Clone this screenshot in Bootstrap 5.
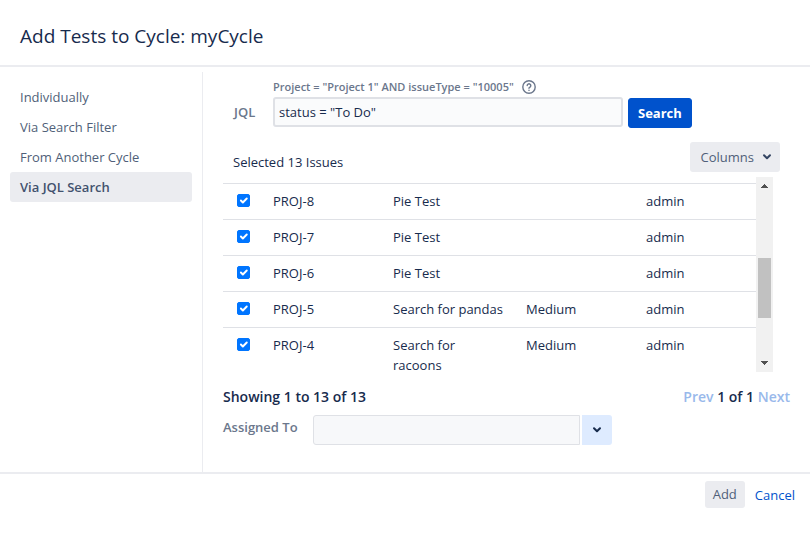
<!DOCTYPE html>
<html lang="en">
<head>
<meta charset="utf-8">
<meta name="viewport" content="width=device-width, initial-scale=1">
<title>Add Tests to Cycle: myCycle</title>
<link href="https://cdn.jsdelivr.net/npm/bootstrap@5.3.0/dist/css/bootstrap.min.css" rel="stylesheet">
<style>
  body { font-family: "Open Sans", "Noto Sans", sans-serif; font-size: 13px; line-height: 20px; color: #172b4d; background: #fff; }
  .btn, .form-control { font-size: 13px; line-height: 20px; border-radius: 3px; color: #172b4d; }
  .dialog-head { height: 67px; padding: 6px 20px 0; border-bottom: 2px solid #ebecf0; }
  .dialog-head h1 { font-size: 19px; line-height: 24px; font-weight: 500; }
  .dialog-body { padding-top: 5px; border-bottom: 2px solid #ebecf0; }
  .side { width: 203px; padding: 10px; border-right: 1px solid #ebecf0; }
  .side .nav-link { padding: 5px 10px; color: #505f79; border-radius: 3px; }
  .side .nav-link.active { background: #ebecf0; color: #42526e; font-weight: 600; }
  .main { padding: 6px 20px 27px; min-width: 0; }
  .form-label { color: #6b778c; }
  .jql-row { padding-left: 11px; }
  .jql-label { width: 39px; margin: 24px 0 0; }
  .jql-field { width: 350px; }
  .jql-hint { font-size: 11px; line-height: 17px; font-weight: 600; color: #6b778c; height: 17px; margin-bottom: 2px; }
  .jql-field .form-control { height: 30px; padding: 3px 4px; background: #fafbfc; border: 2px solid #dfe1e6; }
  .btn-search { height: 30px; padding: 4px 9px; margin: 20px 0 0 5px; background: #0052cc; color: #fff; font-weight: 700; border: 1px solid #0052cc; }
  .btn-soft { background: #ebecf0; border: 0; color: #505f79; }
  .list-head { padding: 14px 10px 0; }
  .list-count { padding-top: 10px; }
  .btn-columns { height: 30px; padding: 5px 8px 5px 11px; }
  .grid { height: 195px; margin: 5px 17px 0 0; }
  .grid-view { padding-top: 6px; overflow: hidden; }
  .issues { table-layout: fixed; color: #172b4d; }
  .issues td { padding: 7px 8px 8px; border: 0; border-top: 1px solid #dfe1e6; background: none; line-height: 20px; }
  .issues td:nth-child(3) { padding-right: 20px; }
  .issues .form-check-input { display: block; width: 13px; height: 13px; margin: 3px 0 0 6px; border-radius: 2px; background-size: 13px; }
  .form-check-input:checked { background-color: #0075ff; border-color: #0075ff; }
  .c-check { width: 42px; } .c-key, .c-prio { width: 120px; } .c-name { width: 133px; }
  .track { width: 17px; background: #f1f1f1; }
  .thumb { width: 13px; height: 60px; margin-top: 26px; background: #c1c1c1; }
  .track svg { height: 17px; }
  .status { padding-top: 15px; font-size: 14px; font-weight: 600; }
  .pager a { color: #99b9eb; text-decoration: none; }
  .assign-label { width: 90px; margin: 2px 0 0; }
  .assign-box { width: 267px; }
  .assign-box.form-control { height: 30px; background: #f7f8fa; border: 1px solid #dfe1e6; border-radius: 3px 0 0 3px; }
  .btn-drop { width: 30px; height: 30px; padding: 0; margin-left: 2px; background: #deebff; border: 0; border-radius: 0 3px 3px 0; }
  .dialog-foot { padding: 7px 15px 30px; }
  .btn-add { height: 27px; padding: 3px 8px 4px; }
  .dialog-foot a { margin-left: 10px; color: #0052cc; text-decoration: none; }
</style>
</head>
<body>
<header class="dialog-head d-flex align-items-center">
  <h1 class="m-0">Add Tests to Cycle: myCycle</h1>
</header>
<div class="dialog-body d-flex">
  <nav class="side nav flex-column flex-shrink-0" aria-label="Ways to add tests">
    <a class="nav-link" href="#">Individually</a>
    <a class="nav-link" href="#">Via Search Filter</a>
    <a class="nav-link" href="#">From Another Cycle</a>
    <a class="nav-link active" href="#" aria-current="page">Via JQL Search</a>
  </nav>
  <main class="main flex-grow-1">
    <form class="jql-row d-flex">
      <label class="form-label jql-label fw-semibold" for="jql">JQL</label>
      <div class="jql-field">
        <div class="jql-hint d-flex align-items-center">
          <span>Project = "Project 1" AND issueType = "10005"</span>
          <svg class="ms-2 flex-shrink-0" width="14" height="14" viewBox="0 0 14 14" fill="none" stroke="#6b778c" stroke-width="1.4" stroke-linecap="round" stroke-linejoin="round" role="img" aria-label="Help"><circle cx="7" cy="7" r="6.2"/><path d="M5.2 5.5a1.8 1.8 0 1 1 2.8 1.6c-.7.4-1 .7-1 1.2"/><path d="M7 10.3v.1"/></svg>
        </div>
        <input class="form-control" id="jql" type="text" value='status = "To Do"'>
      </div>
      <button class="btn btn-search" type="button">Search</button>
    </form>
    <div class="list-head d-flex justify-content-between">
      <span class="list-count">Selected 13 Issues</span>
      <button class="btn btn-soft btn-columns d-flex align-items-center" type="button">Columns
        <svg class="ms-2" width="10" height="8" viewBox="0 0 10 8" fill="none" stroke="#344563" stroke-width="2" stroke-linecap="round" stroke-linejoin="round" aria-hidden="true"><path d="M2 2.3l3 3 3-3"/></svg>
      </button>
    </div>
    <div class="grid d-flex">
      <div class="grid-view flex-grow-1">
        <table class="table issues m-0">
          <colgroup><col class="c-check"><col class="c-key"><col class="c-name"><col class="c-prio"><col></colgroup>
          <tbody>
            <tr><td><input class="form-check-input" type="checkbox" checked aria-label="Select PROJ-8"></td><td>PROJ-8</td><td>Pie Test</td><td></td><td>admin</td></tr>
            <tr><td><input class="form-check-input" type="checkbox" checked aria-label="Select PROJ-7"></td><td>PROJ-7</td><td>Pie Test</td><td></td><td>admin</td></tr>
            <tr><td><input class="form-check-input" type="checkbox" checked aria-label="Select PROJ-6"></td><td>PROJ-6</td><td>Pie Test</td><td></td><td>admin</td></tr>
            <tr><td><input class="form-check-input" type="checkbox" checked aria-label="Select PROJ-5"></td><td>PROJ-5</td><td class="text-nowrap">Search for pandas</td><td>Medium</td><td>admin</td></tr>
            <tr><td><input class="form-check-input" type="checkbox" checked aria-label="Select PROJ-4"></td><td>PROJ-4</td><td>Search for racoons</td><td>Medium</td><td>admin</td></tr>
          </tbody>
        </table>
      </div>
      <div class="track d-flex flex-column align-items-center justify-content-between flex-shrink-0" aria-hidden="true">
        <svg width="17" viewBox="0 0 17 17"><path fill="#505050" d="M8 7h1v1h1v1h1v1h1v1H5v-1h1V9h1V8h1z"/></svg>
        <div class="thumb"></div>
        <svg width="17" viewBox="0 0 17 17"><path fill="#505050" d="M5 6h7v1h-1v1h-1v1H9v1H8V9H7V8H6V7H5z"/></svg>
      </div>
    </div>
    <div class="status d-flex justify-content-between">
      <span>Showing 1 to 13 of 13</span>
      <span class="pager"><a href="#">Prev</a> 1 of 1 <a href="#">Next</a></span>
    </div>
    <div class="d-flex pt-2">
      <label class="form-label assign-label fw-semibold" for="assignee">Assigned To</label>
      <input class="form-control assign-box" id="assignee" type="text">
      <button class="btn btn-drop d-flex align-items-center justify-content-center" type="button" aria-label="Show assignees">
        <svg width="10" height="8" viewBox="0 0 10 8" fill="none" stroke="#172b4d" stroke-width="2" stroke-linecap="round" stroke-linejoin="round" aria-hidden="true"><path d="M2 2.3l3 3 3-3"/></svg>
      </button>
    </div>
  </main>
</div>
<footer class="dialog-foot d-flex justify-content-end align-items-center">
  <button class="btn btn-soft btn-add" type="button">Add</button>
  <a href="#">Cancel</a>
</footer>
<script src="https://cdn.jsdelivr.net/npm/bootstrap@5.3.0/dist/js/bootstrap.bundle.min.js"></script>
</body>
</html>
